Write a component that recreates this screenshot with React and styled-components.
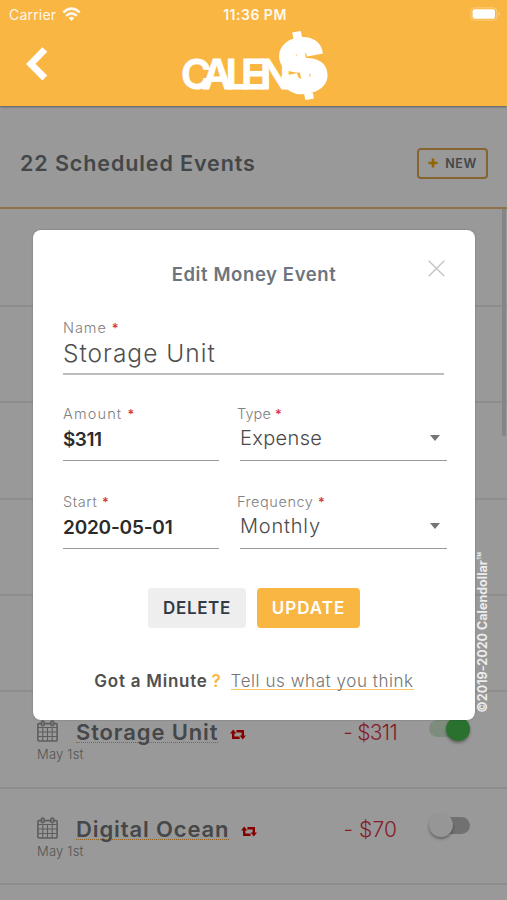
import React from 'react';
import styled, { createGlobalStyle } from 'styled-components';

const GlobalStyle = createGlobalStyle`
    * {
        box-sizing: border-box;
    }

    body {
        margin: 0;
        overflow: hidden;
        background-color: #fff;
        font-family: Inter, 'Open Sans', sans-serif;
    }
`;

const Page = styled.div`
    position: relative;
    width: 507px;
    height: 900px;
    overflow: hidden;
`;

const TopBar = styled.header`
    position: relative;
    z-index: 10;
    height: 106px;
    color: #fff;
    background-color: #fab642;
    box-shadow: 0 1px 2px rgba(0, 0, 0, 0.4);
`;

const StatusBar = styled.div`
    display: grid;
    grid-template-columns: 1fr auto 1fr;
    align-items: center;
    height: 28px;
    padding: 0 6px 0 9px;
    font-size: 14px;
`;

const Carrier = styled.div`
    display: flex;
    align-items: center;
    gap: 6px;
    letter-spacing: 0.2px;
    opacity: 0.9;
`;

const Clock = styled.div`
    font-size: 14px;
    font-weight: 600;
    letter-spacing: 0.5px;
    opacity: 0.92;
`;

const BatteryIcon = styled.svg`
    justify-self: end;
    margin-top: -1px;
`;

const NavBar = styled.div`
    display: grid;
    grid-template-columns: 1fr 150px 1fr;
    align-items: center;
    height: 74px;
    padding: 0 22px;
`;

const LogoIcon = styled.svg`
    overflow: visible;
`;

const ListHeader = styled.div`
    display: flex;
    align-items: center;
    justify-content: space-between;
    height: 103px;
    padding: 13px 19px 0 20px;
    border-bottom: 2px solid #efbf80;
`;

const ListTitle = styled.h2`
    margin: 0;
    font-size: 21.5px;
    font-weight: 600;
    letter-spacing: 0.9px;
    color: #70777a;
`;

const NewButton = styled.button`
    display: flex;
    align-items: center;
    justify-content: center;
    gap: 7px;
    width: 71px;
    height: 31px;
    padding: 0;
    font-family: inherit;
    font-size: 12.5px;
    font-weight: 600;
    letter-spacing: 0.5px;
    color: #70777a;
    background: none;
    border: 2px solid #e0a850;
    border-radius: 4px;
`;

const List = styled.div`
    display: flex;
    flex-direction: column;
    padding-top: 1.3px;
`;

const Row = styled.div`
    display: flex;
    height: 96.45px;
    padding: 28px 37px 0;
    border-bottom: 2px solid #ececec;
`;

const RowInfo = styled.div`
    flex: 1;
`;

const RowTitle = styled.div`
    display: flex;
    align-items: flex-start;
    height: 26px;
`;

const RowName = styled.span`
    margin-left: 18px;
    height: 23px;
    line-height: 25px;
    font-size: 22px;
    font-weight: 600;
    letter-spacing: 0.87px;
    color: #747779;
    border-bottom: 1px dotted #ffa52a;
`;

const RepeatIcon = styled.svg`
    margin: 9px 0 0 12px;
`;

const RowDate = styled.div`
    line-height: 16px;
    font-size: 13px;
    font-weight: 300;
    letter-spacing: 0.2px;
    color: #8d8d8d;
`;

const Amount = styled.div`
    line-height: 26px;
    font-size: 21px;
    font-weight: 300;
    letter-spacing: ${({ $spacing }) => $spacing}px;
    color: #dc3545;
`;

const Switch = styled.div`
    display: flex;
    align-items: center;
    justify-content: ${({ $on }) => ($on ? 'flex-end' : 'flex-start')};
    width: 41px;
    height: 17px;
    margin: 0 0 0 32px;
    border-radius: 9px;
    background-color: ${({ $on }) => ($on ? '#d0ead0' : '#bdbdbd')};
`;

const Thumb = styled.div`
    flex: none;
    width: 24px;
    height: 24px;
    border-radius: 50%;
    background-color: ${({ $on }) => ($on ? '#47bd50' : '#fafafa')};
    box-shadow: 0 2px 3px rgba(0, 0, 0, 0.35);
`;

const ScrollThumb = styled.div`
    position: absolute;
    top: 209px;
    right: 1px;
    width: 4px;
    height: 227px;
    border-radius: 0 0 2px 2px;
    background-color: #dedede;
`;

const Overlay = styled.div`
    display: flex;
    justify-content: center;
    align-items: flex-start;
    position: absolute;
    top: 0;
    left: 0;
    width: 100%;
    height: 100%;
    padding: 230px 0 0 1px;
    background-color: rgba(0, 0, 0, 0.4);
    z-index: 5;
`;

const Modal = styled.div`
    width: 442px;
    height: 490px;
    padding: 30px 30px 0;
    border-radius: 8px;
    background-color: #fff;
    box-shadow: 0 0 2px rgba(0, 0, 0, 0.25);
`;

const ModalHead = styled.div`
    display: grid;
    grid-template-columns: 1fr auto 1fr;
    height: 28px;
`;

const ModalTitle = styled.h3`
    grid-column: 2;
    margin: 0;
    line-height: 28px;
    font-size: 18.5px;
    font-weight: 600;
    letter-spacing: 0.6px;
    color: #6c757d;
`;

const CloseIcon = styled.svg`
    justify-self: end;
`;

const FieldRow = styled.div`
    display: grid;
    grid-template-columns: ${({ $cols }) => $cols};
    column-gap: 18px;
    margin-top: ${({ $top }) => $top}px;
`;

const Label = styled.label`
    display: block;
    line-height: 16px;
    font-size: 14.5px;
    font-weight: 300;
    letter-spacing: ${({ $spacing }) => $spacing}px;
    color: #808080;

    span {
        font-size: 13px;
        font-weight: 500;
        color: #d32f3f;
    }
`;

const NameInput = styled.div`
    height: 39px;
    line-height: 35px;
    font-size: 24.5px;
    font-weight: 300;
    letter-spacing: 1px;
    color: #4f4f4f;
    border-bottom: 2px solid #bdbdbd;
`;

const Input = styled.div`
    height: 39px;
    line-height: 35px;
    font-size: 19px;
    font-weight: 600;
    letter-spacing: ${({ $spacing }) => $spacing}px;
    color: #2b2b2b;
    border-bottom: 1px solid #9a9a9a;
`;

const Select = styled.div`
    display: flex;
    align-items: center;
    justify-content: space-between;
    height: 39px;
    margin-left: 3px;
    padding: 0 7px 6px 0;
    font-size: 20px;
    font-weight: 300;
    letter-spacing: ${({ $spacing }) => $spacing}px;
    color: #4a4a4a;
    border-bottom: 1px solid #9a9a9a;
`;

const Actions = styled.div`
    display: flex;
    justify-content: center;
    gap: 11px;
    margin-top: 39px;
`;

const Button = styled.button`
    width: ${({ $primary }) => ($primary ? 103 : 98)}px;
    height: 40px;
    padding: 0;
    font-family: inherit;
    font-size: 17px;
    font-weight: 600;
    letter-spacing: ${({ $primary }) => ($primary ? 1 : 0.65)}px;
    color: ${({ $primary }) => ($primary ? '#fff' : '#323a46')};
    background-color: ${({ $primary }) => ($primary ? '#fab642' : '#eeeeee')};
    border: none;
    border-radius: 4px;
`;

const Feedback = styled.div`
    display: flex;
    justify-content: center;
    align-items: flex-start;
    margin-top: 41px;
    line-height: 24px;
    font-size: 17px;
    font-weight: 600;
    letter-spacing: 0.75px;
    color: #505050;
`;

const Mark = styled.span`
    margin: 0 9px 0 4px;
    color: #fab642;
`;

const FeedbackLink = styled.a`
    height: 21px;
    font-weight: 300;
    letter-spacing: 0.56px;
    color: #757575;
    border-bottom: 1px solid #fbc566;
`;

const Copyright = styled.div`
    position: absolute;
    right: 16px;
    bottom: 187px;
    z-index: 6;
    writing-mode: vertical-rl;
    text-orientation: sideways;
    transform: rotate(180deg);
    line-height: 16px;
    font-size: 12.5px;
    font-weight: 700;
    letter-spacing: 0.02px;
    color: #ececec;
`;

const WifiIcon = () => (
    <svg width="19" height="15" viewBox="0 0 19 15" fill="none" stroke="#fff" strokeWidth="2.6">
        <path d="M1.3 5.4 Q9.5 -2.3 17.7 5.4" />
        <path d="M4.2 8.9 Q9.5 4 14.8 8.9" />
        <path d="M6.6 11 Q9.5 8.6 12.4 11 L9.5 14 Z" fill="#fff" stroke="none" />
    </svg>
);

const Logo = () => (
    <LogoIcon width="150" height="74" viewBox="0 0 150 74" fill="#fff" stroke="#fff" fontFamily="Inter, sans-serif">
        <text x="2 23 46.5 62 81" y="61" fontSize="41" fontWeight="600" strokeWidth="1">CALEN</text>
        <text fontSize="70" fontWeight="800" strokeWidth="4.6" textAnchor="middle"
            transform="translate(128.5 62.5) rotate(-11)">$</text>
    </LogoIcon>
);

const CalendarIcon = () => (
    <svg width="21" height="22" viewBox="0 0 21 22" fill="none" stroke="#9c9c9c">
        <rect x="0.9" y="3.6" width="19.2" height="17.4" rx="1" strokeWidth="1.6" />
        <path d="M1 7.5H20M1 12H20M1 16.5H20M5.8 7.5V21M10.5 7.5V21M15.2 7.5V21" strokeWidth="1.1" />
        <rect x="4.2" y="0.8" width="3" height="5" rx="1.4" fill="#d0d0d0" strokeWidth="1.3" />
        <rect x="13.8" y="0.8" width="3" height="5" rx="1.4" fill="#d0d0d0" strokeWidth="1.3" />
    </svg>
);

const Repeat = () => (
    <RepeatIcon width="16" height="11" viewBox="0 0 16 11" fill="none" stroke="#dd0000">
        <path d="M3.2 4V8.8H9.6M6.4 2.2H12.8V7" strokeWidth="2.4" />
        <path d="M3.2 0.4L6.4 4.6H0ZM12.8 10.6L16 6.4H9.6Z" fill="#dd0000" stroke="none" />
    </RepeatIcon>
);

const Arrow = () => (
    <svg width="10" height="6" viewBox="0 0 10 6">
        <path d="M0 0H10L5 6Z" fill="#757575" />
    </svg>
);

const events = [
    { id: 1 },
    { id: 2 },
    { id: 3 },
    { id: 4 },
    { id: 5 },
    { id: 6, name: 'Storage Unit', date: 'May 1st', amount: '- $311', on: true, spacing: -0.7 },
    { id: 7, name: 'Digital Ocean', date: 'May 1st', amount: '- $70', on: false, spacing: 0.1 },
    { id: 8 },
];

const EventRow = ({ event }) => {
    if (!event.name) return <Row />;
    return (
        <Row>
            <RowInfo>
                <RowTitle>
                    <CalendarIcon />
                    <RowName>{event.name}</RowName>
                    <Repeat />
                </RowTitle>
                <RowDate>{event.date}</RowDate>
            </RowInfo>
            <Amount $spacing={event.spacing}>{event.amount}</Amount>
            <Switch $on={event.on}>
                <Thumb $on={event.on} />
            </Switch>
        </Row>
    );
};

export default function App() {
    return (
        <Page>
            <GlobalStyle />
            <TopBar>
                <StatusBar>
                    <Carrier>Carrier <WifiIcon /></Carrier>
                    <Clock>11:36 PM</Clock>
                    <BatteryIcon width="31" height="14" viewBox="0 0 31 14">
                        <rect x="0.8" y="0.8" width="26" height="12.4" rx="3.5" fill="none" stroke="#fff" strokeOpacity="0.3" />
                        <rect x="2.6" y="2.3" width="22.4" height="9.4" rx="2" fill="#fff" />
                        <path d="M28.5 5V9Q30 8.4 30 7T28.5 5Z" fill="#fff" fillOpacity="0.3" />
                    </BatteryIcon>
                </StatusBar>
                <NavBar>
                    <svg width="30" height="40" viewBox="0 0 30 40" fill="none">
                        <path d="M22.8 4.5L8.8 19L22.8 33" stroke="#fff" strokeWidth="6.8" />
                    </svg>
                    <Logo />
                </NavBar>
            </TopBar>
            <ListHeader>
                <ListTitle>22 Scheduled Events</ListTitle>
                <NewButton>
                    <svg width="10" height="10" viewBox="0 0 10 10">
                        <path d="M5 0.5V9.5M0.5 5H9.5" stroke="#f5a800" strokeWidth="2.6" />
                    </svg>
                    NEW
                </NewButton>
            </ListHeader>
            <List>
                {events.map((event) => (
                    <EventRow key={event.id} event={event} />
                ))}
            </List>
            <ScrollThumb />
            <Overlay>
                <Modal>
                    <ModalHead>
                        <ModalTitle>Edit Money Event</ModalTitle>
                        <CloseIcon width="17" height="17" viewBox="0 0 17 17">
                            <path d="M0.7 0.7L16.3 16.3M16.3 0.7L0.7 16.3" stroke="#c4c4c4" strokeWidth="1.4" />
                        </CloseIcon>
                    </ModalHead>
                    <FieldRow $cols="381px" $top={32}>
                        <div>
                            <Label $spacing={0.95}>Name <span>*</span></Label>
                            <NameInput>Storage Unit</NameInput>
                        </div>
                    </FieldRow>
                    <FieldRow $cols="156px 210px" $top={31}>
                        <div>
                            <Label $spacing={1.15}>Amount <span>*</span></Label>
                            <Input $spacing={-0.5}>$311</Input>
                        </div>
                        <div>
                            <Label $spacing={0.1}>Type <span>*</span></Label>
                            <Select $spacing={0.35}>Expense <Arrow /></Select>
                        </div>
                    </FieldRow>
                    <FieldRow $cols="156px 210px" $top={33}>
                        <div>
                            <Label $spacing={0.6}>Start <span>*</span></Label>
                            <Input $spacing={-0.2}>2020-05-01</Input>
                        </div>
                        <div>
                            <Label $spacing={0.55}>Frequency <span>*</span></Label>
                            <Select $spacing={0.8}>Monthly <Arrow /></Select>
                        </div>
                    </FieldRow>
                    <Actions>
                        <Button>DELETE</Button>
                        <Button $primary>UPDATE</Button>
                    </Actions>
                    <Feedback>
                        Got a Minute
                        <Mark>?</Mark>
                        <FeedbackLink>Tell us what you think</FeedbackLink>
                    </Feedback>
                </Modal>
            </Overlay>
            <Copyright>©2019-2020 Calendollar™</Copyright>
        </Page>
    );
}
